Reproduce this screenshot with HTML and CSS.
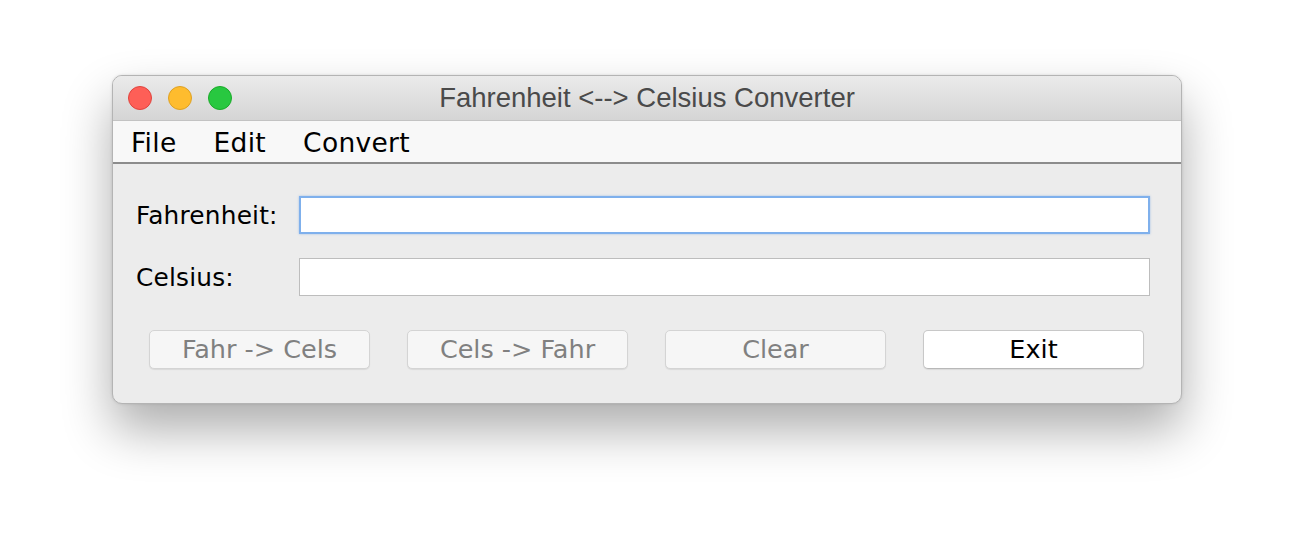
FILE: index.html
```html
<!DOCTYPE html>
<html>
<head>
<meta charset="utf-8">
<link rel="stylesheet" href="styles.css">
</head>
<body>
<div class="stage">
  <div class="window">
    <div class="titlebar">
      <div class="lights">
        <span class="light red"></span>
        <span class="light yellow"></span>
        <span class="light green"></span>
      </div>
      <div class="title">Fahrenheit &lt;--&gt; Celsius Converter</div>
    </div>
    <div class="menubar">
      <span class="menu">File</span>
      <span class="menu">Edit</span>
      <span class="menu">Convert</span>
    </div>
    <div class="content">
      <div class="form">
        <label class="label">Fahrenheit:</label>
        <div class="field focused"></div>
        <label class="label">Celsius:</label>
        <div class="field"></div>
      </div>
      <div class="buttons">
        <button class="btn disabled">Fahr -&gt; Cels</button>
        <button class="btn disabled">Cels -&gt; Fahr</button>
        <button class="btn disabled">Clear</button>
        <button class="btn">Exit</button>
      </div>
    </div>
  </div>
</div>
</body>
</html>
```

FILE: styles.css
```css
html, body {
  margin: 0;
  padding: 0;
  background: #ffffff;
}
.stage {
  padding: 75px 0 0 112px;
  min-height: 552px;
  box-sizing: border-box;
}
.window {
  width: 1070px;
  height: 329px;
  box-sizing: border-box;
  border: 1px solid #b4b4b4;
  border-radius: 10px;
  overflow: hidden;
  background: #ececec;
  box-shadow: 0 26px 50px rgba(0, 0, 0, 0.32), 0 0 3px rgba(0, 0, 0, 0.12);
  display: flex;
  flex-direction: column;
}
.titlebar {
  height: 44px;
  flex: none;
  position: relative;
  background: linear-gradient(#ebebeb, #d5d5d5);
  border-bottom: 1px solid #c3c3c3;
  display: flex;
  align-items: center;
  justify-content: center;
}
.lights {
  position: absolute;
  left: 15px;
  top: 10px;
  display: flex;
  gap: 16px;
}
.light {
  width: 24px;
  height: 24px;
  box-sizing: border-box;
  border-radius: 50%;
}
.red { background: #fe5f57; border: 1px solid #e0443e; }
.yellow { background: #febc2e; border: 1px solid #dea123; }
.green { background: #28c840; border: 1px solid #1aab29; }
.title {
  font-family: "Liberation Sans", Arial, sans-serif;
  font-size: 27.5px;
  color: #4a4a4a;
}
.menubar {
  height: 43px;
  flex: none;
  background: #f8f8f8;
  border-bottom: 2px solid #8c8c8c;
  display: flex;
  align-items: center;
  padding-left: 18px;
  padding-top: 2px;
  box-sizing: border-box;
  gap: 37px;
  font-family: "DejaVu Sans", "Lucida Grande", sans-serif;
  font-size: 26.5px;
  color: #000;
}
.menu { letter-spacing: 0.3px; }
.content {
  flex: 1;
  padding: 32px 31px 0 23px;
}
.form {
  display: grid;
  grid-template-columns: 163px 1fr;
  row-gap: 24px;
  align-items: center;
}
.label {
  font-family: "DejaVu Sans", "Lucida Grande", sans-serif;
  font-size: 24.8px;
  color: #000;
  letter-spacing: 0.2px;
}
.field {
  height: 38px;
  box-sizing: border-box;
  background: #ffffff;
  border: 1px solid #bdbdbd;
}
.field.focused {
  border: 2px solid #7fb0ec;
  box-shadow: 0 0 2px rgba(110, 160, 230, 0.6);
}
.buttons {
  display: flex;
  gap: 37px;
  margin-top: 34px;
  padding-left: 13px;
}
.btn {
  width: 221px;
  height: 39px;
  box-sizing: border-box;
  border: 1px solid #c8c8c8;
  border-bottom-color: #b8b8b8;
  border-radius: 5px;
  background: #ffffff;
  font-family: "DejaVu Sans", "Lucida Grande", sans-serif;
  font-size: 25.5px;
  line-height: 1;
  color: #000;
  padding: 0;
  box-shadow: 0 1px 1px rgba(0, 0, 0, 0.08);
}
.btn.disabled {
  background: #f6f6f6;
  color: #808080;
  border-color: #d4d4d4;
}
```
